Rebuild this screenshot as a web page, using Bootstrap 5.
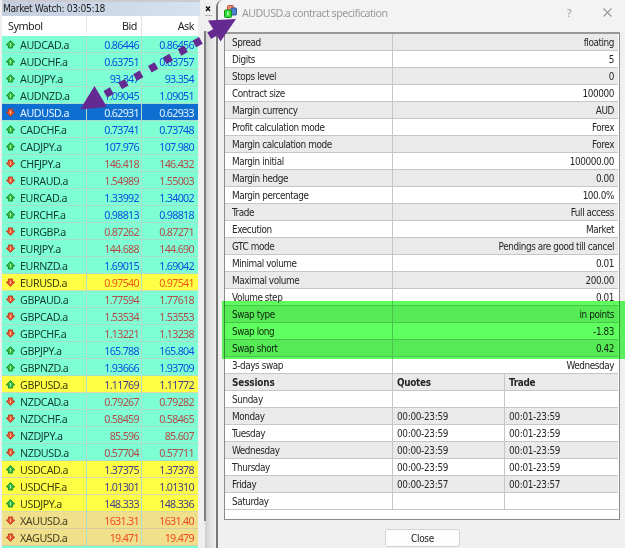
<!DOCTYPE html>
<html lang="en">
<head>
<meta charset="utf-8">
<title>Market Watch</title>
<meta name="viewport" content="width=device-width, initial-scale=1">
<link href="https://cdn.jsdelivr.net/npm/bootstrap@5.3.0/dist/css/bootstrap.min.css" rel="stylesheet">
<style>
body{width:625px;height:548px;overflow:hidden;background:#efefef;font-family:"DejaVu Sans Condensed","DejaVu Sans",sans-serif;font-stretch:condensed;font-size:9.9px;letter-spacing:-.42px;line-height:18px;color:#262626}
.watch{width:205px;padding-left:2px}
.watch-title{height:16px;width:198px;background:linear-gradient(90deg,#c3cfdf,#d6e2ef);border-top:2px solid #c9cbd0;color:#222;line-height:14px;font-size:10.2px;letter-spacing:-.36px;padding-left:1px}
.quotes{width:196px;font-family:"Noto Sans","Open Sans",sans-serif;font-size:10.7px;letter-spacing:-.4px}
.q-head{height:20px;line-height:20px;background:#fff;font-size:10.8px;letter-spacing:-.5px}
.q-head .c-sym{padding-left:6px}
.q-row{height:17px;line-height:18px;background:#7fffd4;color:#103c36;border-bottom:1px solid #a9dccb}
.q-row>div,.q-head>div{white-space:nowrap;border-right:1px solid #b0dccb}
.q-head>div{border-color:#e2e2e2}
.q-row>div:last-child,.q-head>div:last-child{border-right:0}
.c-sym{width:85px;height:17px}.c-bid{width:55px;padding-right:2px}.c-ask{width:56px;padding-right:4px}
.c-bid,.c-ask{text-align:right}
.q-row .c-bid,.q-row .c-ask{letter-spacing:-.68px}
.up .c-bid,.up .c-ask{color:#0b4fe0}
.down .c-bid,.down .c-ask{color:#b34a49}
.major{background:#ffff45;color:#3f3f10;border-color:#d8d8b0}
.major.up .c-bid,.major.up .c-ask{color:#45408a}
.major.down .c-bid,.major.down .c-ask{color:#f0561a}
.metal{background:#f0e08c;color:#463f20;border-color:#d8cba0}
.metal.down .c-bid,.metal.down .c-ask{color:#f04a20}
.picked,.picked.down .c-bid,.picked.down .c-ask{background:#0f6fd0;color:#e4f2ff}
.picked.down .c-bid,.picked.down .c-ask{height:16px}
.q-row svg{margin:0 5px 0 4px}
.gutter{width:11px;background:linear-gradient(90deg,#cfcfcf,#e2e2e2 50%,#efefef)}
.gutter-top{height:31px;background:#efefef;padding-top:6px}
.gutter-top svg{display:block}
.scroll-line{width:2px;height:490px;margin-left:-1px;background:#7d7d7d}
.spec{width:409px;background:#f0f0f0;border-left:2px solid #777;border-top-left-radius:7px}
.spec-title{height:32px;line-height:26px;font-family:"Noto Sans","Open Sans",sans-serif;font-size:10.7px;letter-spacing:-.53px;color:#9a9a9a;background:#f3f3f3;border-top-left-radius:6px;padding-left:1px}
.title-icons{width:45px;margin-right:13px}
.sheet{margin-left:6px;width:396px;height:488px;background:#fff;border:1px solid #8b8b8b;border-top:2px solid #999;padding-right:1px}
.s-row{height:17px;border-bottom:1px solid #c6c6c6}
.s-row:nth-child(odd){background:#eaeaea}
.s-row.fw-bold{letter-spacing:-.15px}
.s-row>div{height:16px;padding-left:7px;white-space:nowrap}
.s-name{width:168px;border-right:1px solid #c6c6c6}
.s-q{width:112px;border-right:1px solid #c6c6c6}
.s-row>.s-q,.s-row>.s-t{padding-left:4px;letter-spacing:-.3px}
.s-val{padding-right:4px}
.close-btn{width:75px;height:18px;margin:9px 0 0 167px;line-height:17px;background:#fdfdfd;border:1px solid #d2d2d2;border-radius:3px;font-size:10px;letter-spacing:-.3px;padding:0;color:#222}
.swap-mark{left:222px;top:301px;width:403px;height:58px;background:#5eff5e;mix-blend-mode:multiply}
.pointer{left:0;top:0}
</style>
</head>
<body class="d-flex position-relative">
<svg width="0" height="0" class="position-absolute"><defs>
<g id="up"><path d="M4.500 .6 8.700 4.900 6.600 5.300V8H2.400V5.300L.3 4.900Z" fill="#35c043" stroke="#17852a" stroke-width=".9"/><path d="M4.500 3V6.500" stroke="#b8f5a8" stroke-width="1"/></g>
<g id="down"><path d="M4.500 8.400 8.700 4.100 6.600 3.700V1H2.400V3.700L.3 4.100Z" fill="#f2582f" stroke="#b3391f" stroke-width=".9"/><path d="M4.500 2.500V6" stroke="#ffc0a0" stroke-width="1"/></g>
</defs></svg>

<section class="watch flex-shrink-0">
  <div class="watch-title">Market Watch: 03:05:18</div>
  <div class="quotes" id="quotes">
    <div class="q-head d-flex"><div class="c-sym">Symbol</div><div class="c-bid pe-1">Bid</div><div class="c-ask">Ask</div></div>
  </div>
</section>
<div class="gutter flex-shrink-0">
  <div class="gutter-top"><svg width="8" height="10" viewBox="0 0 8 10"><path d="M1 .5l4 4.500m0-4.500l-4 4.500" stroke="#111" stroke-width="1.400"/><path d="M0 9.500h7" stroke="#b5b5b5"/></svg></div>
  <div class="scroll-line"></div>
</div>
<section class="spec flex-shrink-0">
  <header class="spec-title d-flex">
    <svg width="15" height="20" viewBox="0 0 15 20" class="ms-1"><rect x="4.500" y="5.500" width="6" height="6" rx="1" fill="#f08a70" stroke="#c0503c"/><rect x="8" y="8" width="5.500" height="7" rx="1" fill="#4f82cc" stroke="#31599c"/><rect x="1.500" y="10" width="7" height="7.500" rx="1" fill="#2fdb35" stroke="#158a1c"/><path d="M5 11.500v4" stroke="#d5ffd0" stroke-width="1.200"/></svg>
    <span class="ms-1">AUDUSD.a contract specification</span>
    <div class="title-icons ms-auto d-flex justify-content-between"><span>?</span>
    <svg width="9" height="9" viewBox="0 0 9 9" class="mt-2"><path d="M.5.5l8 8m0-8l-8 8" stroke="#999" stroke-width="1.100"/></svg></div>
  </header>
  <div class="sheet" id="sheet"></div>
  <button class="btn close-btn d-block">Close</button>
</section>

<div class="swap-mark position-absolute"></div>
<svg class="pointer position-absolute" width="625" height="548" viewBox="0 0 625 548">
  <path d="M105.300 94.300 L217 31.300" stroke="#652a92" stroke-width="7.500" stroke-dasharray="7.500 9.540" fill="none"/>
  <path d="M94.500 86 107 107 80 109.500Z M208 20.500 236 19 220.500 41.500Z" fill="#652a92"/>
</svg>

<script>
const quotes = `AUDCAD 0.86446 0.86456 u
AUDCHF 0.63751 0.63757 u
AUDJPY 93.347 93.354 u
AUDNZD 1.09045 1.09051 u
AUDUSD 0.62931 0.62933 d picked
CADCHF 0.73741 0.73748 u
CADJPY 107.976 107.980 u
CHFJPY 146.418 146.432 d
EURAUD 1.54989 1.55003 d
EURCAD 1.33992 1.34002 u
EURCHF 0.98813 0.98818 u
EURGBP 0.87262 0.87271 d
EURJPY 144.688 144.690 d
EURNZD 1.69015 1.69042 u
EURUSD 0.97540 0.97541 d major
GBPAUD 1.77594 1.77618 d
GBPCAD 1.53534 1.53553 d
GBPCHF 1.13221 1.13238 d
GBPJPY 165.788 165.804 u
GBPNZD 1.93666 1.93709 u
GBPUSD 1.11769 1.11772 u major
NZDCAD 0.79267 0.79282 d
NZDCHF 0.58459 0.58465 d
NZDJPY 85.596 85.607 d
NZDUSD 0.57704 0.57711 d
USDCAD 1.37375 1.37378 u major
USDCHF 1.01301 1.01310 u major
USDJPY 148.333 148.336 u major
XAUUSD 1631.31 1631.40 d metal
XAGUSD 19.471 19.479 d metal`.split("\n").map(l => l.split(" "));
document.getElementById("quotes").insertAdjacentHTML("beforeend", quotes.map(([s,b,a,d,k=""]) => {
  const dir = d === "u" ? "up" : "down";
  return `<div class="q-row d-flex ${dir} ${k}"><div class="c-sym d-flex align-items-center"><svg width="9" height="9"><use href="#${dir}"/></svg><span>${s}.a</span></div><div class="c-bid">${b}</div><div class="c-ask">${a}</div></div>`;
}).join("") + '<div class="q-row"></div>');

const spec = [["Spread","floating"],["Digits","5"],["Stops level","0"],["Contract size","100000"],["Margin currency","AUD"],["Profit calculation mode","Forex"],["Margin calculation mode","Forex"],["Margin initial","100000.00"],["Margin hedge","0.00"],["Margin percentage","100.0%"],["Trade","Full access"],["Execution","Market"],["GTC mode","Pendings are good till cancel"],["Minimal volume","0.01"],["Maximal volume","200.00"],["Volume step","0.01"],["Swap type","in points"],["Swap long","-1.83"],["Swap short","0.42"],["3-days swap","Wednesday"]];
const day = "00:00-23:59", trade = "00:01-23:59";
const sessions = [["Sessions","Quotes","Trade"],["Sunday","",""],["Monday",day,trade],["Tuesday",day,trade],["Wednesday",day,trade],["Thursday",day,trade],["Friday","00:00-23:57","00:01-23:57"],["Saturday","",""]];
document.getElementById("sheet").innerHTML =
  spec.map(([n,v]) => `<div class="s-row d-flex"><div class="s-name">${n}</div><div class="s-val flex-grow-1 text-end">${v}</div></div>`).join("") +
  sessions.map(([n,q,t],i) => `<div class="s-row d-flex ${i ? "" : "fw-bold"}"><div class="s-name">${n}</div><div class="s-q">${q}</div><div class="s-t">${t}</div></div>`).join("");
</script>
<script src="https://cdn.jsdelivr.net/npm/bootstrap@5.3.0/dist/js/bootstrap.bundle.min.js"></script>
</body>
</html>
